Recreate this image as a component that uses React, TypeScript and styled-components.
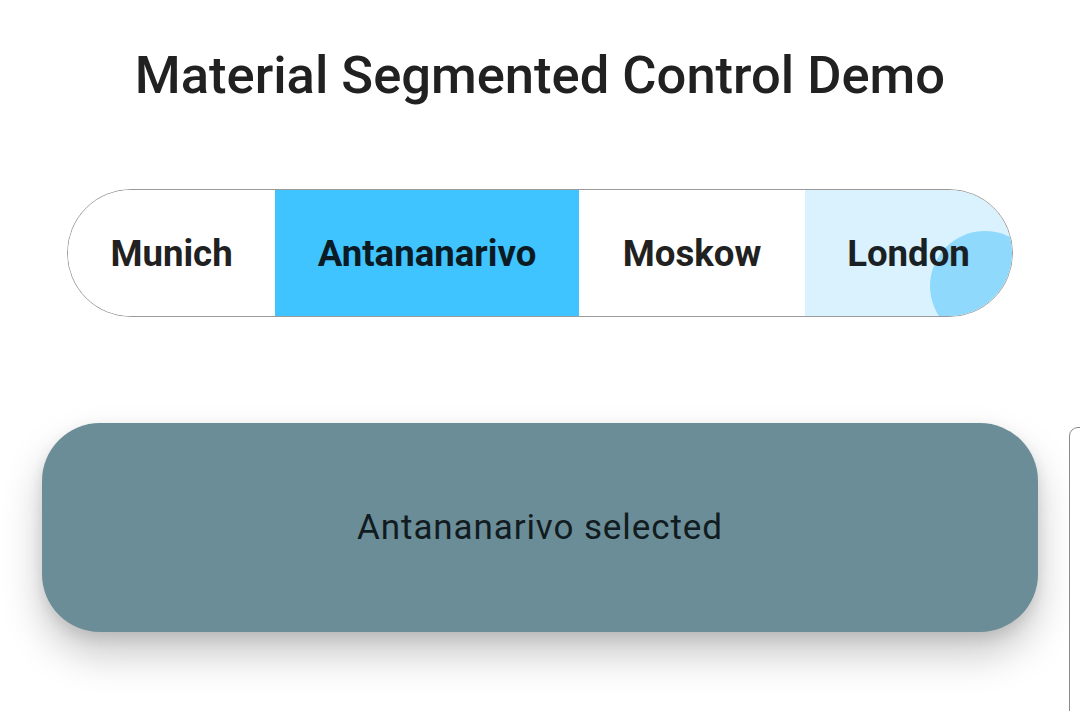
import React from "react";
import styled, { createGlobalStyle } from "styled-components";

const Global = createGlobalStyle`
  html, body { margin: 0; padding: 0; background: #ffffff; }
  body { font-family: Roboto, "Noto Sans", sans-serif; overflow: hidden; }
`;

const Page = styled.div`
  width: 1080px;
  height: 711px;
  position: relative;
  overflow: hidden;
  display: flex;
  flex-direction: column;
  align-items: center;
  background: #fff;
`;

const Title = styled.h1`
  margin: 44px 0 0;
  font-family: Roboto, sans-serif;
  font-weight: 500;
  font-size: 52.5px;
  line-height: 62px;
  color: #212121;
  letter-spacing: 0;
`;

const Control = styled.div`
  margin-top: 83px;
  width: 946px;
  height: 128px;
  box-sizing: border-box;
  border: 1px solid #9a9a9a;
  border-radius: 64px;
  display: flex;
  overflow: hidden;
  position: relative;
`;

const Segment = styled.div<{ $w: number; $bg: string; $fg: string }>`
  position: relative;
  width: ${(p) => p.$w}px;
  flex: none;
  display: flex;
  align-items: center;
  justify-content: center;
  background: ${(p) => p.$bg};
  color: ${(p) => p.$fg};
  font-family: Roboto, sans-serif;
  font-weight: 700;
  font-size: 36.6px;
  overflow: hidden;
`;

const Label = styled.span`
  position: relative;
  z-index: 1;
`;

const Ripple = styled.span`
  position: absolute;
  left: 125px;
  top: 41px;
  width: 110px;
  height: 110px;
  border-radius: 50%;
  background: #8fdafc;
`;

const Snack = styled.div`
  margin-top: 106px;
  width: 996px;
  height: 209px;
  border-radius: 58px;
  background: #6a8d98;
  box-shadow: 0 22px 40px rgba(0, 0, 0, 0.22), 0 6px 14px rgba(0, 0, 0, 0.1);
  display: flex;
  align-items: center;
  justify-content: center;
  font-family: Roboto, sans-serif;
  font-size: 35px;
  letter-spacing: 0.9px;
  font-weight: 400;
  color: #111b20;
`;

const EdgeCard = styled.div`
  position: absolute;
  left: 1069px;
  top: 427px;
  width: 60px;
  height: 320px;
  border: 1px solid #8a8a8a;
  border-radius: 9px;
  background: #fff;
`;

const segments = [
  { name: "Munich", w: 207, bg: "#ffffff", fg: "#212121" },
  { name: "Antananarivo", w: 304, bg: "#40c4ff", fg: "#0b1b24" },
  { name: "Moskow", w: 226, bg: "#ffffff", fg: "#212121" },
  { name: "London", w: 207, bg: "#d9f2fe", fg: "#1a2125", ripple: true },
];

export default function App() {
  return (
    <Page>
      <Global />
      <Title>Material Segmented Control Demo</Title>
      <Control>
        {segments.map((s) => (
          <Segment key={s.name} $w={s.w} $bg={s.bg} $fg={s.fg}>
            {s.ripple && <Ripple />}
            <Label>{s.name}</Label>
          </Segment>
        ))}
      </Control>
      <Snack>Antananarivo selected</Snack>
      <EdgeCard />
    </Page>
  );
}
